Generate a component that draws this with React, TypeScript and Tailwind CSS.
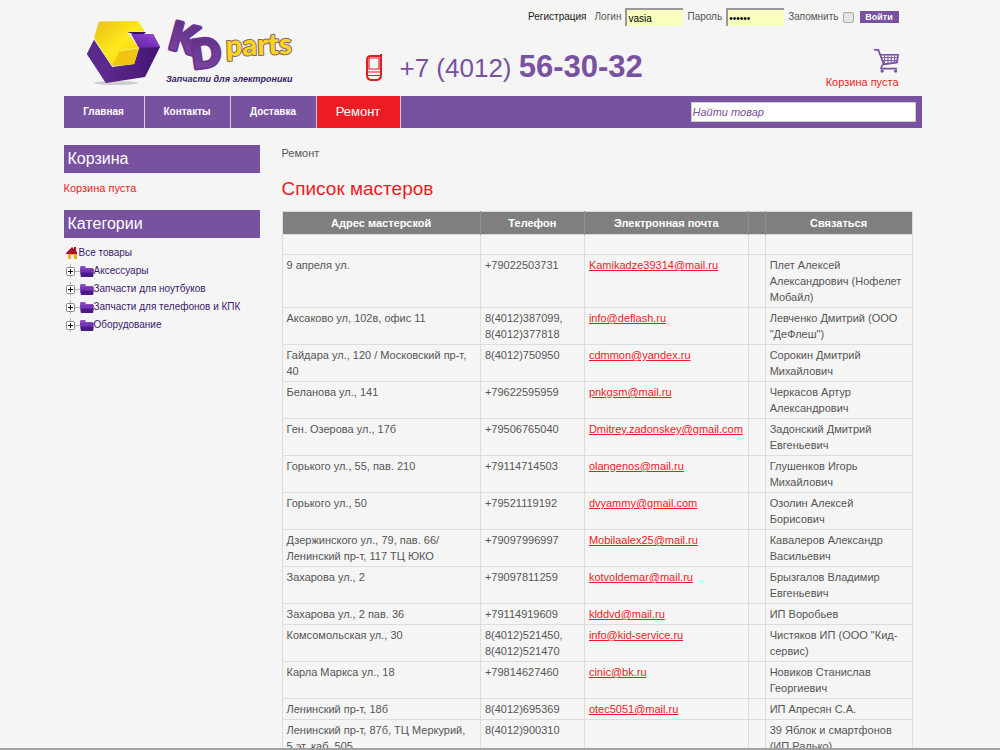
import React, { useState } from 'react';

type Master = {
  address: string;
  phone: string;
  email: string;
  contact: string;
};

const masters: Master[] = [
  { address: '9 апреля ул.', phone: '+79022503731', email: 'Kamikadze39314@mail.ru', contact: 'Плет Алексей Александрович (Нофелет Мобайл)' },
  { address: 'Аксаково ул, 102в, офис 11', phone: '8(4012)387099, 8(4012)377818', email: 'info@deflash.ru', contact: 'Левченко Дмитрий (ООО "ДеФлеш")' },
  { address: 'Гайдара ул., 120 / Московский пр-т, 40', phone: '8(4012)750950', email: 'cdmmon@yandex.ru', contact: 'Сорокин Дмитрий Михайлович' },
  { address: 'Беланова ул., 141', phone: '+79622595959', email: 'pnkgsm@mail.ru', contact: 'Черкасов Артур Александрович' },
  { address: 'Ген. Озерова ул., 17б', phone: '+79506765040', email: 'Dmitrey.zadonskey@gmail.com', contact: 'Задонский Дмитрий Евгеньевич' },
  { address: 'Горького ул., 55, пав. 210', phone: '+79114714503', email: 'olangenos@mail.ru', contact: 'Глушенков Игорь Михайлович' },
  { address: 'Горького ул., 50', phone: '+79521119192', email: 'dvyammy@gmail.com', contact: 'Озолин Алексей Борисович' },
  { address: 'Дзержинского ул., 79, пав. 66/ Ленинский пр-т, 117 ТЦ ЮКО', phone: '+79097996997', email: 'Mobilaalex25@mail.ru', contact: 'Кавалеров Александр Васильевич' },
  { address: 'Захарова ул., 2', phone: '+79097811259', email: 'kotvoldemar@mail.ru', contact: 'Брызгалов Владимир Евгеньевич' },
  { address: 'Захарова ул., 2 пав. 36', phone: '+79114919609', email: 'klddvd@mail.ru', contact: 'ИП Воробьев' },
  { address: 'Комсомольская ул., 30', phone: '8(4012)521450, 8(4012)521470', email: 'info@kid-service.ru', contact: 'Чистяков ИП (ООО "Кид-сервис)' },
  { address: 'Карла Маркса ул., 18', phone: '+79814627460', email: 'cinic@bk.ru', contact: 'Новиков Станислав Георгиевич' },
  { address: 'Ленинский пр-т, 18б', phone: '8(4012)695369', email: 'otec5051@mail.ru', contact: 'ИП Апресян С.А.' },
  { address: 'Ленинский пр-т, 87б, ТЦ Меркурий, 5\u00a0эт. каб. 505', phone: '8(4012)900310', email: '', contact: '39 Яблок и смартфонов (ИП Ралько)' },
];

const categories = ['Аксессуары', 'Запчасти для ноутбуков', 'Запчасти для телефонов и КПК', 'Оборудование'];

const Logo: React.FC = () => (
  <svg width="216" height="72" viewBox="0 0 216 72" role="img" aria-label="KD parts">
    <defs>
      <linearGradient id="yellow" x1="0" y1="0" x2="1" y2="1">
        <stop offset="0" stopColor="#e8c014" />
        <stop offset="0.5" stopColor="#ffe81c" />
        <stop offset="1" stopColor="#f4cb10" />
      </linearGradient>
      <linearGradient id="purple" x1="0" y1="0" x2="1" y2="0">
        <stop offset="0" stopColor="#65309a" />
        <stop offset="1" stopColor="#431470" />
      </linearGradient>
      <linearGradient id="purpleTop" x1="0" y1="1" x2="1" y2="0">
        <stop offset="0" stopColor="#5a1f96" />
        <stop offset="1" stopColor="#9a4be0" />
      </linearGradient>
      <linearGradient id="letters" x1="0" y1="0" x2="0" y2="1">
        <stop offset="0" stopColor="#5c2c80" />
        <stop offset="1" stopColor="#8048a6" />
      </linearGradient>
    </defs>
    <ellipse cx="32" cy="67" rx="22" ry="2" fill="#cfcfcf" />
    <path d="M10 24 3 38 22 67 61 61 76 31 69 18H48L55 32 50 48 28 51z" fill="url(#purple)" />
    <path d="M10 24 3 38 22 67 28 51z" fill="#5a2a8c" />
    <path d="M43 16 49 18H60L62 16z" fill="#3a0f62" />
    <path d="M47 18H69L76 31 55 32z" fill="url(#purpleTop)" />
    <path d="M15 5.500 54 5 61 15.500 43 16 55 32 50 48 28 50 10 22z" fill="url(#yellow)" />
    <path d="M28 50 36 35 55 32 50 48z" fill="#f0c512" />
    <path d="M36 35 55 32" stroke="#fff27a" strokeWidth="0.8" />
    <g fontFamily="Lato, sans-serif" fontSize="39" fontWeight="900" fill="url(#letters)" stroke="#6a3690" strokeWidth="4" strokeLinejoin="round" paintOrder="stroke">
      <text x="83" y="32" transform="rotate(15 83 32)">K</text>
      <text x="109" y="53" transform="rotate(-8 109 53)">D</text>
    </g>
    <text x="142" y="40" transform="rotate(-2 142 40)" fontFamily="Lato, sans-serif" fontSize="29" fontWeight="900" fill="#f9d51e" stroke="#86636a" strokeWidth="2" strokeLinejoin="round" paintOrder="stroke">parts</text>
    <text x="82" y="66" fontFamily="Liberation Sans, sans-serif" fontSize="9" fontWeight="700" fontStyle="italic" fill="#3b1d66">Запчасти для электроники</text>
  </svg>
);

const MobileIcon: React.FC = () => (
  <svg width="16" height="27" viewBox="0 0 16 27" fill="none" stroke="#e31b23" aria-hidden="true">
    <path d="M15 0V21Q15 26 10 26H6Q1 26 1 21V6Q1 2 5 2H15" strokeWidth="2" />
    <path d="M3 4H13V15H3zM2 18H14M2 21.500H14" strokeWidth="1.2" />
  </svg>
);

const CartIcon: React.FC = () => (
  <svg width="25" height="26" viewBox="1 0 26 26" fill="none" stroke="#7851a1" strokeWidth="1.8" aria-hidden="true">
    <path d="M1 1.500H5.500L11 16Q8 18 8.500 21H25M7 6.500H26L25 14.500L11 16.500" />
    <path d="M8 9.500H25.500M9.500 12.500H25M12 7V16M15.500 7V16M19 7V15.500M22.500 7V15" strokeWidth="1" />
    <circle cx="9.500" cy="23.500" r="1.700" fill="#7851a1" stroke="none" />
    <circle cx="23.500" cy="23.500" r="1.700" fill="#7851a1" stroke="none" />
  </svg>
);

const HomeIcon: React.FC = () => (
  <svg width="12" height="12" viewBox="0 0 12 12" aria-hidden="true">
    <path d="M2 6H11V12H8V8H5V12H2z" fill="#f9a825" />
    <path d="M0 7V6L6 0 8 2V0H10V4L11 5V7z" fill="#a3142a" />
  </svg>
);

const PlusIcon: React.FC = () => (
  <svg width="15" height="18" viewBox="0 0 15 18" aria-hidden="true">
    <path d="M5.500 2V16M9 9.500H15" stroke="#b5b5b5" />
    <rect x="1.500" y="5.500" width="8" height="8" rx="1" fill="#fff" stroke="#8a8a8a" />
    <path d="M3 9.500H8M5.500 7V12" stroke="#111" />
  </svg>
);

const FolderIcon: React.FC = () => (
  <svg width="14" height="11" viewBox="0 0 14 11" aria-hidden="true">
    <path d="M0 1 1 0H5L6 2H13V9L12 10H1L0 3z" fill="#8a4cc4" />
    <path d="M0 3H14L13 11H1z" fill="#7636b4" />
    <path d="M0.500 6.500H13.500L13 11H1z" fill="#4b1a85" />
  </svg>
);

const App: React.FC = () => {
  const [login, setLogin] = useState<string>('vasia');
  const [password, setPassword] = useState<string>('secret');
  const [remember, setRemember] = useState<boolean>(false);
  const [search, setSearch] = useState<string>('');

  return (
    <div className="min-h-screen bg-[#f5f5f5] pr-[15px] font-['Liberation_Sans',Arial,sans-serif] text-[11px] leading-4 text-[#555]">
      <div className="mx-auto w-full max-w-[858px]">
        <header className="flex h-24">
          <a href="#" className="ml-5 mt-4 shrink-0">
            <Logo />
          </a>
          <div className="flex flex-1 flex-col pr-[23px] pt-2">
            <form className="flex items-center justify-end text-[10px]" onSubmit={(e) => e.preventDefault()}>
              <a href="#" className="mr-2 text-[#222]">Регистрация</a>
              <label htmlFor="login" className="mr-1">Логин</label>
              <input
                id="login"
                type="text"
                value={login}
                onChange={(e) => setLogin(e.target.value)}
                className="mr-1 h-[18px] w-[58px] border-l-2 border-t-2 border-[#999] bg-[#faffbd] px-px text-black"
              />
              <label htmlFor="password" className="mr-1">Пароль</label>
              <input
                id="password"
                type="password"
                value={password}
                onChange={(e) => setPassword(e.target.value)}
                className="mr-1 h-[18px] w-[58px] border-l-2 border-t-2 border-[#999] bg-[#faffbd] px-px text-black"
              />
              <label htmlFor="remember" className="mr-1">Запомнить</label>
              <input
                id="remember"
                type="checkbox"
                checked={remember}
                onChange={(e) => setRemember(e.target.checked)}
                className="mr-1.5 size-[11px] appearance-none rounded-xs border border-[#aaa] bg-[#e4e4e4] checked:bg-[#7851a1]"
              />
              <button type="submit" className="h-3 w-[39px] bg-[#7851a1] text-[9px] leading-3 font-bold text-white">Войти</button>
            </form>
            <div className="flex flex-1 items-center justify-between pl-[66px] pt-3">
              <div className="flex items-center text-[#7851a1]">
                <MobileIcon />
                <span className="ml-[18px] text-[26px] leading-8">
                  +7 (4012) <b className="text-[31px]">56-30-32</b>
                </span>
              </div>
              <a href="#" className="flex flex-col items-end pt-1 text-[#ed1c24]">
                <CartIcon />
                Корзина пуста
              </a>
            </div>
          </div>
        </header>

        <nav className="flex h-8 items-stretch bg-[#7851a1] text-white">
          <a href="#" className="flex w-[81px] items-center justify-center border-r border-[#d9cde6] text-[10px] font-bold">Главная</a>
          <a href="#" className="flex w-[86px] items-center justify-center border-r border-[#d9cde6] text-[10px] font-bold">Контакты</a>
          <a href="#" className="flex w-[86px] items-center justify-center border-r border-[#d9cde6] text-[10px] font-bold">Доставка</a>
          <a href="#" className="flex w-[84px] items-center justify-center border-r border-[#d9cde6] bg-[#ed1c24] text-[13px]">Ремонт</a>
          <form className="ml-auto flex items-center pr-1.5" onSubmit={(e) => e.preventDefault()}>
            <input
              type="search"
              aria-label="Найти товар"
              placeholder="Найти товар"
              value={search}
              onChange={(e) => setSearch(e.target.value)}
              className="h-5 w-[225px] border border-[#ccc] bg-white px-px text-[11px] italic text-[#7851a1] placeholder:text-[#7851a1]"
            />
          </form>
        </nav>

        <div className="flex gap-[22px] pt-[17px]">
          <aside className="w-[196px] shrink-0">
            <h2 className="bg-[#7851a1] px-1 text-base leading-7 text-white">Корзина</h2>
            <p className="mt-[7px] text-[#ed1c24]">Корзина пуста</p>
            <h2 className="mt-3.5 bg-[#7851a1] px-1 text-base leading-7 text-white">Категории</h2>
            <ul className="mt-1.5 text-[10px] leading-[18px] text-[#3d1a6e]">
              <li className="flex items-center pl-0.5">
                <HomeIcon />
                <a href="#" className="ml-px">Все товары</a>
              </li>
              {categories.map((category) => (
                <li key={category} className="flex items-center pl-px">
                  <PlusIcon />
                  <FolderIcon />
                  <a href="#">{category}</a>
                </li>
              ))}
            </ul>
          </aside>

          <main className="min-w-0 flex-1 pr-[9px]">
            <p>Ремонт</p>
            <h1 className="mt-3.5 text-[19px] leading-7 text-[#ed1c24]">Список мастеров</h1>
            <table className="mt-2 w-full table-fixed border-collapse border border-[#dcdcdc]">
              <colgroup>
                <col className="w-[31.5%]" />
                <col className="w-[16.5%]" />
                <col className="w-[26%]" />
                <col className="w-[2.7%]" />
                <col />
              </colgroup>
              <thead>
                <tr className="h-[23px] bg-[#7f7f7f] text-white">
                  <th className="border-r border-[#8f8f8f]">Адрес мастерской</th>
                  <th className="border-r border-[#8f8f8f]">Телефон</th>
                  <th className="border-r border-[#8f8f8f]">Электронная почта</th>
                  <th className="border-r border-[#8f8f8f]"></th>
                  <th>Связаться</th>
                </tr>
              </thead>
              <tbody>
                <tr className="h-5">
                  <td className="border border-[#dcdcdc]"></td>
                  <td className="border border-[#dcdcdc]"></td>
                  <td className="border border-[#dcdcdc]"></td>
                  <td className="border border-[#dcdcdc]"></td>
                  <td className="border border-[#dcdcdc]"></td>
                </tr>
                {masters.map((master, index) => (
                  <tr key={index} className="align-top">
                    <td className="border border-[#dcdcdc] px-1 py-0.5">{master.address}</td>
                    <td className="border border-[#dcdcdc] px-1 py-0.5">{master.phone}</td>
                    <td className="border border-[#dcdcdc] px-1 py-0.5">
                      {master.email && (
                        <a href={`mailto:${master.email}`} className="text-[#ed1c24] underline">{master.email}</a>
                      )}
                    </td>
                    <td className="border border-[#dcdcdc]"></td>
                    <td className="border border-[#dcdcdc] px-1 py-0.5">{master.contact}</td>
                  </tr>
                ))}
              </tbody>
            </table>
          </main>
        </div>
      </div>
      <div className="fixed inset-x-0 bottom-0 h-0.5 bg-[#a3a3a3]"></div>
    </div>
  );
};

export default App;
